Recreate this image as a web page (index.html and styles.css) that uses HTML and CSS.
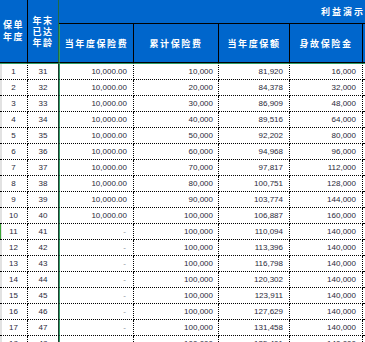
FILE: index.html
```html
<!DOCTYPE html>
<html lang="zh">
<head>
<meta charset="utf-8">
<link rel="stylesheet" href="styles.css">
</head>
<body>
<table class="sheet">
  <colgroup>
    <col class="c1"><col class="c2"><col class="c3"><col class="c4"><col class="c5"><col class="c6"><col class="c7">
  </colgroup>
  <thead>
    <tr class="h1">
      <th class="hc1" rowspan="2">保单<br>年度</th>
      <th class="hc2" rowspan="2">年末<br>已达<br>年龄</th>
      <th class="htitle" colspan="5">利益演示</th>
    </tr>
    <tr class="h2">
      <th class="hsub g">当年度保险费</th>
      <th class="hsub">累计保险费</th>
      <th class="hsub">当年度保额</th>
      <th class="hsub">身故保险金</th>
      <th class="hedge"></th>
    </tr>
  </thead>
  <tbody>
    <tr><td class="n1">1</td><td class="n2">31</td><td class="v3">10,000.00</td><td class="v4">10,000</td><td class="v5">81,920</td><td class="v6">16,000</td><td class="e"></td></tr>
    <tr><td class="n1">2</td><td class="n2">32</td><td class="v3">10,000.00</td><td class="v4">20,000</td><td class="v5">84,378</td><td class="v6">32,000</td><td class="e"></td></tr>
    <tr><td class="n1">3</td><td class="n2">33</td><td class="v3">10,000.00</td><td class="v4">30,000</td><td class="v5">86,909</td><td class="v6">48,000</td><td class="e"></td></tr>
    <tr><td class="n1">4</td><td class="n2">34</td><td class="v3">10,000.00</td><td class="v4">40,000</td><td class="v5">89,516</td><td class="v6">64,000</td><td class="e"></td></tr>
    <tr><td class="n1">5</td><td class="n2">35</td><td class="v3">10,000.00</td><td class="v4">50,000</td><td class="v5">92,202</td><td class="v6">80,000</td><td class="e"></td></tr>
    <tr><td class="n1">6</td><td class="n2">36</td><td class="v3">10,000.00</td><td class="v4">60,000</td><td class="v5">94,968</td><td class="v6">96,000</td><td class="e"></td></tr>
    <tr><td class="n1">7</td><td class="n2">37</td><td class="v3">10,000.00</td><td class="v4">70,000</td><td class="v5">97,817</td><td class="v6">112,000</td><td class="e"></td></tr>
    <tr><td class="n1">8</td><td class="n2">38</td><td class="v3">10,000.00</td><td class="v4">80,000</td><td class="v5">100,751</td><td class="v6">128,000</td><td class="e"></td></tr>
    <tr><td class="n1">9</td><td class="n2">39</td><td class="v3">10,000.00</td><td class="v4">90,000</td><td class="v5">103,774</td><td class="v6">144,000</td><td class="e"></td></tr>
    <tr><td class="n1">10</td><td class="n2">40</td><td class="v3">10,000.00</td><td class="v4">100,000</td><td class="v5">106,887</td><td class="v6">160,000</td><td class="e"></td></tr>
    <tr><td class="n1 mark">11</td><td class="n2">41</td><td class="v3 dash">-</td><td class="v4">100,000</td><td class="v5">110,094</td><td class="v6">140,000</td><td class="e"></td></tr>
    <tr><td class="n1">12</td><td class="n2">42</td><td class="v3 dash">-</td><td class="v4">100,000</td><td class="v5">113,396</td><td class="v6">140,000</td><td class="e"></td></tr>
    <tr><td class="n1">13</td><td class="n2">43</td><td class="v3 dash">-</td><td class="v4">100,000</td><td class="v5">116,798</td><td class="v6">140,000</td><td class="e"></td></tr>
    <tr><td class="n1">14</td><td class="n2">44</td><td class="v3 dash">-</td><td class="v4">100,000</td><td class="v5">120,302</td><td class="v6">140,000</td><td class="e"></td></tr>
    <tr><td class="n1">15</td><td class="n2">45</td><td class="v3 dash">-</td><td class="v4">100,000</td><td class="v5">123,911</td><td class="v6">140,000</td><td class="e"></td></tr>
    <tr><td class="n1">16</td><td class="n2">46</td><td class="v3 dash">-</td><td class="v4">100,000</td><td class="v5">127,629</td><td class="v6">140,000</td><td class="e"></td></tr>
    <tr><td class="n1">17</td><td class="n2">47</td><td class="v3 dash">-</td><td class="v4">100,000</td><td class="v5">131,458</td><td class="v6">140,000</td><td class="e"></td></tr>
    <tr><td class="n1">18</td><td class="n2">48</td><td class="v3 dash">-</td><td class="v4">100,000</td><td class="v5">135,401</td><td class="v6">140,000</td><td class="e"></td></tr>
  </tbody>
</table>
</body>
</html>
```

FILE: styles.css
```css
html, body {
  margin: 0;
  padding: 0;
  background: #ffffff;
}

body {
  width: 365px;
  height: 342px;
  overflow: hidden;
}

.sheet {
  border-collapse: separate;
  border-spacing: 0;
  table-layout: fixed;
  width: 365px;
  font-family: "Liberation Sans", Arial, sans-serif;
}

.c1 { width: 28px; }
.c2 { width: 31px; }
.c3 { width: 75px; }
.c4 { width: 85px; }
.c5 { width: 71px; }
.c6 { width: 73px; }
.c7 { width: 2px; }

/* header */
.sheet th {
  background: #0066cc;
  color: #ffffff;
  font-family: "Noto Sans CJK SC", "Noto Sans", sans-serif;
  font-weight: 700;
  font-size: 9px;
  padding: 0;
  white-space: nowrap;
  overflow: hidden;
}

.h1 { height: 24px; }
.h2 { height: 39px; }

.hc1, .hc2 {
  border-right: 1px solid #000;
  border-bottom: 1px solid #000;
  line-height: 11px;
  text-align: center;
  letter-spacing: 1.5px;
}

.hc1 {
  line-height: 12px;
  padding-top: 1px;
}

.hc2 {
  border-right: 1px solid #1f6b45;
  padding-top: 1px;
}

.htitle {
  border-bottom: 1px solid #000;
  text-align: right;
  padding-right: 0;
  letter-spacing: 2px;
  padding-top: 2px;
}

.hsub {
  border-right: 1px solid #000;
  border-bottom: 1px solid #000;
  text-align: center;
  letter-spacing: 1.6px;
  padding-top: 4px;
}

.hsub.g {
  border-left: 1px solid #2f9a66;
}

.hedge {
  border-bottom: 1px solid #000;
}

/* body */
.sheet td {
  height: 15px;
  padding: 0;
  border-right: 1px dotted #000;
  border-bottom: 1px dotted #000;
  font-size: 8px;
  color: #2a2a3a;
  white-space: nowrap;
  overflow: hidden;
  line-height: 15px;
}

.sheet tbody tr:first-child td {
  border-top: 1px solid #2f9a66;
}

.sheet tbody tr:first-child td.n1,
.sheet tbody tr:first-child td.n2 {
  border-top: 1px solid #2f9a66;
}

.n1 {
  text-align: center;
  box-shadow: inset 2px 0 0 #e2e2e2;
}

.n1.mark {
  box-shadow: inset 1px 0 0 #3aa335, inset 2px 0 0 #e2e2e2;
}

.n2 {
  text-align: center;
}

.sheet td.n2 {
  border-right: 1px solid #1f3b2e;
}

.v3 {
  text-align: right;
  padding-right: 6px !important;
  border-left: 1px solid #2f9a66;
}

.v3.dash {
  color: #8a8f99;
  padding-right: 7px !important;
}

.v4 {
  text-align: right;
  padding-right: 5px !important;
}

.v5 {
  text-align: right;
  padding-right: 6px !important;
}

.v6 {
  text-align: right;
  padding-right: 6px !important;
}

.sheet td.e {
  border-right: none;
}
```
